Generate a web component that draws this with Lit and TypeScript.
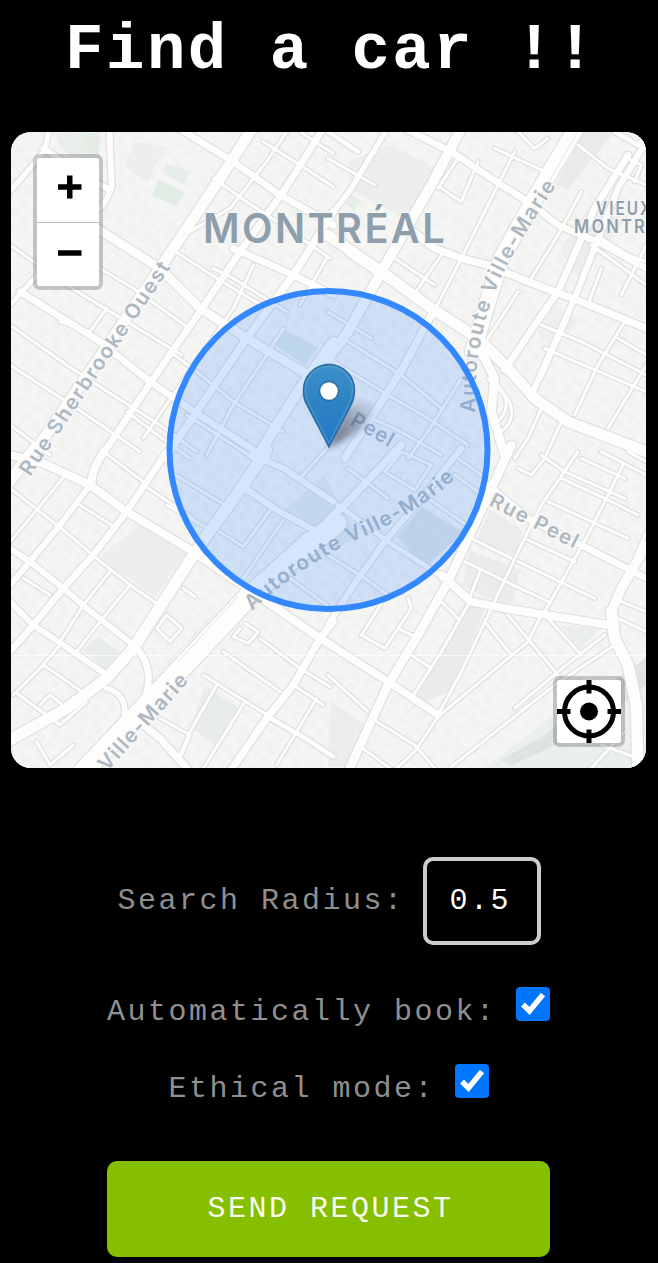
import { LitElement, html, svg, css } from "lit";
import { customElement, property } from "lit/decorators.js";

type Road = [number, string];
interface Sheet { x: number; y: number; roads: Road[] }

// Street sheets: each is drawn at three units per pixel, offset to its corner of the map.
const sheets: Sheet[] = [
  { x: 0, y: 125, roads: [
    [9, "M30 360L200 480L380 590L545 690"], [9, "M200 370L400 490L560 605"],
    [9, "M30 600L200 720L330 805L480 900L590 980"], [9, "M30 720L230 850L420 980"],
    [9, "M520 375L650 460L800 550"], [9, "M510 680L590 740L700 830L850 920"],
    [9, "M640 430L700 460L860 560"], [9, "M640 160L740 230L860 310L990 400"],
    [9, "M180 590L270 620L320 550"], [9, "M760 420L700 550L560 750L430 940"],
    [9, "M860 20L800 110L690 250L570 320"], [9, "M900 20L960 60L1000 85"],
    [9, "M790 50L900 120L1000 185"], [9, "M30 900L150 990"],
    [9, "M850 610L800 690L700 840L620 990"], [9, "M560 870L700 960L760 1000"],
    [9, "M980 400L900 540"], [9, "M380 860L500 950L570 1000"],
    [16, "M20 210L90 130L135 75L150 0"], [18, "M328 10L335 180Q325 230 290 258"],
    [14, "M30 540L130 430L290 258"], [18, "M130 70L220 130L320 190"],
    [20, "M520 0L700 110L840 210L1000 300"], [26, "M290 310L480 430L600 550L740 640L900 735L1000 800"],
    [20, "M700 370L880 450L1000 510"], [20, "M60 500L300 650L450 770L590 865L800 1000"],
    [20, "M970 10L850 200L720 380L600 560L450 775L300 1000"],
    [22, "M1000 260L880 450L740 640L590 860L495 1000"],
    [30, "M1000 650L900 790L830 900L770 1000"],
    [32, "M770 -10L690 115L500 400L300 695L90 1000"],
  ] },
  { x: 328, y: 125, roads: [
    [9, "M560 80L480 240L400 400L315 565"], [9, "M390 100L330 190"],
    [9, "M500 70L650 140"], [9, "M450 110L400 230L340 190"],
    [9, "M200 400L320 480"], [9, "M340 390L250 520"], [9, "M60 390L180 470L310 550"],
    [9, "M570 500L480 640"], [9, "M640 600L760 650L955 750"], [9, "M720 580L640 760"],
    [9, "M890 590L810 720L740 870"], [9, "M955 720L840 910"], [9, "M750 60L840 130L955 180"],
    [9, "M790 360L955 480"], [9, "M820 340L900 390L955 410"], [9, "M870 640L955 690"],
    [9, "M760 200L690 330L610 460"], [9, "M955 360L880 510"], [9, "M650 670L860 760L955 800"],
    [9, "M820 430L780 540"], [9, "M900 100L940 120L920 170"], [9, "M570 20L620 70L660 40"],
    [9, "M480 760L540 820Q570 880 520 920"], [9, "M510 780Q560 840 510 890"],
    [9, "M640 850L600 940L560 1000"], [9, "M700 890L650 1000"], [9, "M0 100L140 180"],
    [9, "M0 700L180 810L300 880L420 960"], [9, "M60 650L220 750L340 850"],
    [9, "M400 760L300 920L240 1000"], [9, "M130 880L200 910L340 990"], [9, "M0 560L130 640"],
    [16, "M175 15L70 190L-5 290"], [14, "M0 20L90 80"], [14, "M955 30L930 60L860 20"],
    [22, "M310 570L230 720L160 830L50 1000"],
    [18, "M955 50L870 190L740 520L610 810"], [20, "M900 90L800 250L690 500L620 600L530 735"],
    [20, "M210 0L370 80L520 180L600 230L690 300L830 360L955 430"],
    [22, "M230 300L320 370L400 400L480 420L600 470L760 530L955 610"],
    [30, "M400 10L310 180L160 440L60 620L0 700"],
    [48, "M750 0L620 220L520 400L470 560L435 680"],
    [32, "M0 330L160 440L310 550L450 640L540 730L620 820L720 890L955 980"],
    [26, "M440 640L500 760L490 860L530 990"],
  ] },
  { x: 0, y: 445, roads: [
    [9, "M30 130L190 255L290 340L390 420L470 475"], [9, "M200 85L110 195L30 290"],
    [9, "M240 180L350 250"], [9, "M310 20L430 110"], [9, "M430 120L580 220"],
    [9, "M70 400L150 450"], [9, "M330 380L250 480L180 590"], [9, "M390 420L300 530L230 620"],
    [9, "M500 510L470 550L510 590L545 550L500 510"], [9, "M550 430L585 455"],
    [9, "M610 690L850 840"], [9, "M670 620L840 740"], [9, "M780 580L900 670L990 725"],
    [9, "M650 720L570 860L540 930"], [9, "M735 770L610 970"], [9, "M720 550L700 575L745 595L775 560L735 535"],
    [9, "M480 820L570 870L545 930"], [9, "M180 600L120 670L40 750"], [9, "M130 660L260 750"],
    [9, "M50 745L180 840L260 770"], [9, "M120 780L150 750L200 790"], [9, "M110 890L150 960L220 900"],
    [9, "M510 80L690 190"], [9, "M500 180L640 260"], [9, "M660 260L730 305L815 190L740 140"],
    [9, "M850 225L730 400"], [9, "M920 265L750 420"], [9, "M900 100L990 0"],
    [9, "M880 720L970 780"], [9, "M950 760L830 960"], [9, "M870 400L980 480"],
    [14, "M810 820L900 870L1000 935"], [18, "M730 125L830 195L960 265L1000 290"],
    [18, "M750 30L850 70L1000 170"], [16, "M320 730Q390 750 370 830"],
    [18, "M30 310L90 350L190 430L260 490L400 600"], [18, "M30 470L100 540L190 600L320 690"],
    [20, "M410 610Q465 670 435 760"], [22, "M430 840L480 880L570 980"],
    [18, "M270 120L180 240L90 350L30 420"], [24, "M315 15Q270 80 275 120"],
    [20, "M500 20L380 200L280 330L190 430L100 540L30 620"],
    [22, "M1000 530L960 580L880 720L800 820L690 980"],
    [24, "M30 30L130 55L270 120L380 200L580 320L740 430L800 470L960 580L1000 605"],
    [34, "M800 15L730 120L600 300L490 470L400 610L320 700L200 790L20 890"],
    [34, "M105 10L20 120"], [60, "M1010 235L890 330L740 460L600 610L440 780L250 980"],
  ] },
  { x: 328, y: 445, roads: [
    [9, "M750 20L640 180L580 300L490 490L400 680L330 810"], [9, "M885 60L780 270L650 500"],
    [9, "M640 510L600 590L330 815L260 920L200 975"], [9, "M860 600L680 720L370 965"],
    [9, "M830 570L690 680L560 790"], [9, "M470 530L550 630"], [9, "M540 510L690 690"],
    [9, "M660 520L760 630"], [9, "M410 350L660 470"], [9, "M600 285L740 350"],
    [9, "M570 350L800 460"], [9, "M660 170L900 280"], [9, "M700 100L830 160L930 210"],
    [9, "M570 70L610 90L650 40"], [9, "M640 30L710 80L890 160"], [9, "M760 40L890 100"],
    [9, "M820 20L955 90"], [9, "M460 370L420 470"], [9, "M420 480L340 620L250 760"],
    [9, "M340 470L390 520"], [9, "M210 550L260 575"], [9, "M250 630L310 670"],
    [9, "M240 460L250 490L170 610L100 570L170 460"], [9, "M130 820L260 900L330 980"],
    [9, "M90 900L200 980"], [9, "M955 260L900 390"], [9, "M900 20L955 50"],
    [9, "M0 690L120 800"], [9, "M880 470L955 500"], [9, "M870 520L955 560"],
    [9, "M890 860L780 980"], [9, "M820 900L930 940"], [9, "M430 280L550 340"],
    [9, "M170 80L260 135L310 60L220 20L170 80"], [9, "M300 160L430 250"],
    [9, "M60 70L180 160"], [9, "M0 330L110 400"], [9, "M100 380L60 440"], [9, "M110 400L180 450"],
    [18, "M400 10L290 150L170 290L70 430L0 540"], [22, "M220 0L50 180L0 225"],
    [14, "M30 180L180 290L350 400"], [9, "M390 40L460 90"], [9, "M380 90L450 140"],
    [20, "M480 120L600 220L760 300L955 400"], [22, "M0 595L180 710L330 810"],
    [24, "M340 390L430 470L530 490L840 540"],
    [26, "M550 0L500 110L360 410L270 570L180 720L60 980"],
    [28, "M955 300L880 430L850 500L850 540"],
    [34, "M850 500L860 580L900 660L925 780L930 980"],
  ] },
];

const parks: [string, string][] = [
  ["#e9efea", "M52 133L100 133L98 168L65 151Z"], ["#e2ede5", "M85 133L100 133L98 154L86 150Z"],
  ["#e1ece5", "M158 180L185 192L177 206L152 196Z"], ["#e5eee8", "M136 160L150 166L144 174L133 168Z"],
  ["#e5eee8", "M166 163L190 172L183 184L164 174Z"],
  ["#eeefed", "M134 142L165 146L148 182L125 166Z"], ["#edeeed", "M97 560L146 520L187 553L154 598L132 580Z"],
  ["#e9edea", "M205 686L240 709L218 746L190 728Z"], ["#e9edea", "M99 636L123 655L106 669L82 649Z"],
  ["#e8ebea", "M284 511L324 475L356 535L337 550Z"], ["#dfe5e7", "M397 536L422 507L463 532L425 568Z"],
  ["#eaedea", "M470 550L520 570L512 608L462 586Z"], ["#e9eeea", "M560 625L600 629L580 649Z"],
  ["#ebebeb", "M466 600L485 610L451 690L410 710Z"], ["#ececec", "M490 510L523 530L515 555L475 543Z"],
  ["#ededed", "M560 250L590 205L625 220L580 280Z"], ["#eaeae9", "M584 132L614 132L567 190L556 184Z"],
  ["#eeefee", "M530 320L550 300L580 320L550 350Z"], ["#eeeeed", "M350 160L390 145L440 170L410 220L350 190Z"],
  ["#e6eee8", "M349 193L362 201L354 210L345 204Z"], ["#e1e9ea", "M282 328L318 348L305 365L273 344Z"],
  ["#ebeeec", "M330 700L365 725L345 767L328 767Z"], ["#eaf0ec", "M485 768L560 710L620 690L646 655L646 768Z"],
  ["#dde2e3", "M501 760L510 766L545 750L600 722L640 690L646 684L646 658L600 690L545 735Z"],
];

@customElement("city-map")
export class CityMap extends LitElement {
  static styles = css`
    :host { display: block; position: relative; height: 636px; border-radius: 20px; overflow: hidden; background: #f5f5f4; }
    .canvas { display: block; width: 100%; height: 100%; }
    .road { fill: none; stroke-linejoin: round; stroke-linecap: round; }
    .casing { stroke: #dfdfdf; }
    .surface { stroke: #fdfdfc; }
    .street { font-family: Inter, "Open Sans", sans-serif; font-weight: 600; font-size: 20.5px; fill: #adb8c1; stroke: #fafafa; stroke-width: 2.5px; paint-order: stroke; stroke-linejoin: round; }
    .inside { stroke-opacity: 0.2; }
    .place { font-family: Inter, "Open Sans", sans-serif; font-weight: 600; fill: #8e9eab; stroke: #f6f6f6; stroke-width: 2px; paint-order: stroke; }
    .control { position: absolute; box-sizing: border-box; border: 4px solid rgba(0, 0, 0, 0.2); border-radius: 7px; background: #fff; background-clip: padding-box; overflow: hidden; }
    .zoom { left: 22px; top: 22px; width: 70px; height: 136px; display: flex; flex-direction: column; }
    .locate { right: 21px; bottom: 21px; width: 72px; height: 71px; display: flex; }
    .key { border: 0; margin: 0; padding: 0; background: #fff; flex: 1; display: flex; align-items: stretch; }
    .key + .key { border-top: 1px solid #bbb; }
    .glyph { display: block; width: 100%; height: 100%; }
  `;

  private layer(kind: "casing" | "surface") {
    const extra = kind === "casing" ? 7 : 0;
    return sheets.map(s => svg`<g transform=${`translate(${s.x} ${s.y}) scale(.33333)`}>
      ${s.roads.map(([w, d]) => svg`<path class="road ${kind}" d=${d} stroke-width=${w + extra}></path>`)}
    </g>`);
  }

  render() {
    return html`
      <svg class="canvas" viewBox="11 132 635 636" preserveAspectRatio="none" role="img" aria-label="Map">
        <defs>
          <pattern id="lots" width="31" height="27" patternUnits="userSpaceOnUse" patternTransform="rotate(34)">
            <path d="M2 2h9v7h-4v5H2zM15 4h7v4h6v7h-8v-4h-5zM4 18h12v6H9v-2H4zM20 19h8v6h-8z" fill="#ebebeb" opacity=".3"></path>
          </pattern>
          <linearGradient id="pin" x1="0" y1="0" x2="0" y2="1">
            <stop offset="0" stop-color="#3c8fca"></stop><stop offset=".45" stop-color="#2e83c4"></stop><stop offset="1" stop-color="#2378c8"></stop>
          </linearGradient>
          <linearGradient id="shade" gradientUnits="userSpaceOnUse" x1="329" y1="447" x2="376" y2="398">
            <stop offset="0" stop-color="#223" stop-opacity=".65"></stop><stop offset="1" stop-color="#223" stop-opacity="0"></stop>
          </linearGradient>
          <filter id="soft" x="-30%" y="-30%" width="160%" height="160%"><feGaussianBlur stdDeviation="3"></feGaussianBlur></filter>
          <path id="ville-east" d="M475 413Q474 350 492 300C504 265 526 232 556 186"></path>
          <path id="ville-mid" d="M252 611Q300 566 360 538Q410 518 456 478"></path>
        </defs>
        <rect x="11" y="132" width="635" height="636" fill="#f5f5f4"></rect>
        ${parks.map(([c, d]) => svg`<path d=${d} fill=${c}></path>`)}
        <rect x="11" y="132" width="635" height="636" fill="url(#lots)"></rect>
        ${this.layer("casing")}
        ${this.layer("surface")}
        <path d="M11 655.500H646" stroke="#fff" stroke-opacity=".7"></path>
        <path d="M213 615L150 682M238 596L178 662M577 133L530 215" stroke="#e3e3e3" fill="none"></path>
        <text class="street" transform="translate(30 477) rotate(-56.100)" textLength="255">Rue Sherbrooke Ouest</text>
        <text class="street"><textPath href="#ville-east" textLength="249">Autoroute Ville-Marie</textPath></text>
        <text class="street inside"><textPath href="#ville-mid" textLength="246">Autoroute Ville-Marie</textPath></text>
        <text class="street" transform="translate(107 772) rotate(-48)" textLength="125">Ville-Marie</text>
        <text class="street" transform="translate(488 505) rotate(27)" textLength="99">Rue Peel</text>
        <text class="street inside" transform="translate(349 424) rotate(30)" textLength="49">Peel</text>
        <text class="place" x="203" y="243" font-size="41" textLength="244" lengthAdjust="spacingAndGlyphs">MONTRÉAL</text>
        <text class="place" x="596" y="215" font-size="19" textLength="57" lengthAdjust="spacingAndGlyphs">VIEUX</text>
        <text class="place" x="574" y="233" font-size="19" textLength="73" lengthAdjust="spacingAndGlyphs">MONTR</text>
        <circle cx="328.500" cy="450" r="159" fill="#3388ff" fill-opacity=".2" stroke="#3388ff" stroke-width="6"></circle>
        <path d="M329 448L342 411Q356 397 371 405Q377 414 358 431Z" fill="url(#shade)" filter="url(#soft)"></path>
        <path d="M329 447L307 405Q303 398 303.500 390A25.500 25.500 0 0 1 354.500 390Q354.500 398 351 405Z" fill="url(#pin)" stroke="#2b6c9c" stroke-width="1.500"></path>
        <path d="M329 443L309 404Q305 397 305.500 390A23.500 23.500 0 0 1 352.500 390Q352.500 397 349 404Z" fill="none" stroke="#7ab3db" stroke-opacity=".35" stroke-width="1.500"></path>
        <circle cx="329" cy="391" r="9.500" fill="#fff" stroke="#2c6fa3" stroke-width="1.500"></circle>
      </svg>
      <div class="control zoom">
        <button class="key" aria-label="Zoom in"><svg class="glyph" viewBox="0 0 62 64"><path d="M21 29H44.500M32.750 17.500V40.500" stroke="#000" stroke-width="5.500"></path></svg></button>
        <button class="key" aria-label="Zoom out"><svg class="glyph" viewBox="0 0 62 64"><path d="M21 30H44.500" stroke="#000" stroke-width="5.500"></path></svg></button>
      </div>
      <div class="control locate">
        <button class="key" aria-label="Locate me"><svg class="glyph" viewBox="0 0 64 63">
          <circle cx="32" cy="31.500" r="24.500" fill="none" stroke="#000" stroke-width="5"></circle>
          <circle cx="32" cy="31.500" r="9"></circle>
          <path d="M32 0V13.500M32 49.500V63M0 31.500H13.500M50.500 31.500H64" stroke="#000" stroke-width="5"></path>
        </svg></button>
      </div>`;
  }
}

@customElement("check-row")
export class CheckRow extends LitElement {
  @property() label = "";
  static styles = css`
    :host { display: flex; justify-content: center; gap: 19.5px; height: 34px; }
    .label { line-height: 34px; padding-top: 8px; white-space: pre; color: #8f8f8f; }
    .box { width: 34px; height: 34px; border-radius: 4px; background: #0075ff; flex: none; }
    .tick { display: block; }
  `;
  render() {
    return html`<span class="label">${this.label}</span>
      <span class="box" role="checkbox" aria-checked="true" aria-label=${this.label}>
        <svg class="tick" width="34" height="34" viewBox="0 0 34 34"><path d="M7 17.500L13.500 24L27 7.500" fill="none" stroke="#fff" stroke-width="5.400"></path></svg>
      </span>`;
  }
}

@customElement("app-root")
export class AppRoot extends LitElement {
  static styles = css`
    :host { display: flex; flex-direction: column; box-sizing: border-box; min-height: 1263px; padding: 0 12px 6px 11px; background: #000; overflow: hidden;
      font-family: "Liberation Mono", monospace; font-size: 30px; letter-spacing: 2.5px; color: #8f8f8f; }
    .title { margin: 0 0 30px; padding-left: 5px; height: 102px; line-height: 102px; font-size: 64px; font-weight: 700; letter-spacing: 2.5px; color: #fff; text-align: center; white-space: pre; }
    .form { display: flex; flex-direction: column; align-items: center; margin-top: 89px; }
    .radius { display: flex; align-items: center; gap: 18px; margin-bottom: 42px; padding-left: 1px; }
    .field { box-sizing: border-box; width: 118px; height: 88px; padding: 0 0 0 23px; border: 4px solid #ccc; border-radius: 10px; background: #000; color: #fff; font: inherit; letter-spacing: inherit; outline: 0; }
    .checks { display: flex; flex-direction: column; gap: 43px; margin-bottom: 63px; }
    .send { width: 443px; height: 96px; padding: 0 0 0 4px; border: 0; border-radius: 10px; background: #86be00; color: #f8fcec; font: inherit; letter-spacing: inherit; }
  `;
  render() {
    return html`
      <h1 class="title">Find a car !!</h1>
      <city-map></city-map>
      <div class="form">
        <label class="radius"><span>Search Radius:</span><input class="field" value="0.5" /></label>
        <div class="checks">
          <check-row label="Automatically book:"></check-row>
          <check-row label="Ethical mode:"></check-row>
        </div>
        <button class="send">SEND REQUEST</button>
      </div>`;
  }
}
